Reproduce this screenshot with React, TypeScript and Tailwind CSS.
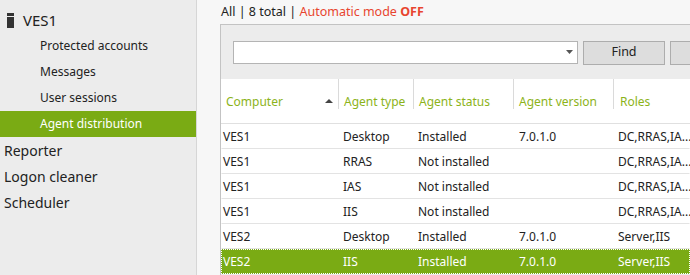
import React from 'react';

interface AgentRow {
  computer: string;
  type: string;
  status: string;
  version: string;
  roles: string;
}

const rows: AgentRow[] = [
  { computer: 'VES1', type: 'Desktop', status: 'Installed', version: '7.0.1.0', roles: 'DC,RRAS,IA...' },
  { computer: 'VES1', type: 'RRAS', status: 'Not installed', version: '', roles: 'DC,RRAS,IA...' },
  { computer: 'VES1', type: 'IAS', status: 'Not installed', version: '', roles: 'DC,RRAS,IA...' },
  { computer: 'VES1', type: 'IIS', status: 'Not installed', version: '', roles: 'DC,RRAS,IA...' },
  { computer: 'VES2', type: 'Desktop', status: 'Installed', version: '7.0.1.0', roles: 'Server,IIS' },
  { computer: 'VES2', type: 'IIS', status: 'Installed', version: '7.0.1.0', roles: 'Server,IIS' },
];

const subItems = ['Protected accounts', 'Messages', 'User sessions', 'Agent distribution'];
const topItems = ['Reporter', 'Logon cleaner', 'Scheduler'];

const font = { fontFamily: '"Segoe UI", "Noto Sans", sans-serif' };

export default function App() {
  return (
    <div className="flex h-[275px] w-[690px] overflow-hidden bg-[#f7f7f7] text-[#222]" style={font}>
      {/* sidebar */}
      <div className="w-[197px] shrink-0 border-r border-[#d6d6d6] bg-[#ececec] pt-[7px]">
        <div className="flex h-[26px] items-center gap-[9px] pl-[7px] text-[15px]">
          <span className="flex flex-col items-center">
            <span className="h-[3px] w-[7px] bg-[#333]" />
            <span className="mt-[1px] h-[11px] w-[7px] bg-[#333]" />
          </span>
          <span>VES1</span>
        </div>
        {subItems.map((s) => (
          <div
            key={s}
            className={`flex h-[26px] items-center pl-[40px] text-[12px] ${
              s === 'Agent distribution' ? 'bg-[#7aab14] text-white' : ''
            }`}
          >
            {s}
          </div>
        ))}
        {topItems.map((s) => (
          <div key={s} className="flex h-[26px] items-center pl-[4px] text-[14px]">
            {s}
          </div>
        ))}
      </div>

      {/* main */}
      <div className="ml-[-1px] flex min-w-0 flex-1 flex-col pl-[24px]">
        <div className="flex h-[24px] shrink-0 items-center pl-[1px] text-[12.5px]">
          <span>All | 8 total |&nbsp;</span>
          <span className="text-[#e8452f]">Automatic mode</span>
          <span className="font-bold text-[#e8452f]">&nbsp;OFF</span>
        </div>
        <div className="flex-1 border-l border-t border-[#c3c3c3] bg-[#ececec]">
          <div className="flex h-[54px] items-center gap-[5px] pl-[12px] pt-[1px]">
            <div className="relative h-[23px] w-[345px] shrink-0 border border-[#b4b4b4] bg-white">
              <svg className="absolute right-[4px] top-[8px]" width="7" height="4" viewBox="0 0 7 4">
                <path d="M0 0h7L3.5 4z" fill="#555" />
              </svg>
            </div>
            <button className="h-[24px] w-[82px] shrink-0 border border-[#adadad] bg-[#dddddd] text-[12.5px] text-[#222]">
              Find
            </button>
            <button className="h-[24px] w-[60px] shrink-0 border border-[#adadad] bg-[#dddddd]" />
          </div>
          <div className="bg-white text-[12px]">
            <div className="flex h-[45px] border-b border-[#e0e0e0] text-[#8cb31a]">
              <div className="relative flex w-[118px] shrink-0 items-end pb-[12px] pl-[5px]">
                Computer
                <svg className="absolute right-[6px] top-[20px]" width="8" height="4" viewBox="0 0 8 4">
                  <path d="M4 0L8 4H0z" fill="#444" />
                </svg>
                <span className="absolute right-0 top-0 h-[30px] w-px bg-[#dadada]" />
              </div>
              <div className="relative flex w-[75px] shrink-0 items-end pb-[12px] pl-[5px]">
                Agent type
                <span className="absolute right-0 top-0 h-[30px] w-px bg-[#dadada]" />
              </div>
              <div className="relative flex w-[100px] shrink-0 items-end pb-[12px] pl-[5px]">
                Agent status
                <span className="absolute right-0 top-0 h-[30px] w-px bg-[#dadada]" />
              </div>
              <div className="relative flex w-[100px] shrink-0 items-end pb-[12px] pl-[5px]">
                Agent version
                <span className="absolute right-0 top-0 h-[30px] w-px bg-[#dadada]" />
              </div>
              <div className="flex flex-1 items-end pb-[12px] pl-[6px]">Roles</div>
            </div>
            {rows.map((r, i) => {
              const selected = i === rows.length - 1;
              return (
                <div
                  key={i}
                  className={`flex h-[25px] items-center border ${
                    selected
                      ? 'border-dotted border-white bg-[#7aab14] text-white'
                      : 'border-transparent border-b-[#e3e3e3]'
                  }`}
                >
                  <div className="w-[118px] shrink-0 pl-[1px]">{r.computer}</div>
                  <div className="w-[75px] shrink-0 pl-[3px]">{r.type}</div>
                  <div className="w-[100px] shrink-0 pl-[3px]">{r.status}</div>
                  <div className="w-[100px] shrink-0 pl-[4px]">{r.version}</div>
                  <div className="flex-1 whitespace-nowrap pl-[3px]">{r.roles}</div>
                </div>
              );
            })}
          </div>
        </div>
      </div>
    </div>
  );
}
